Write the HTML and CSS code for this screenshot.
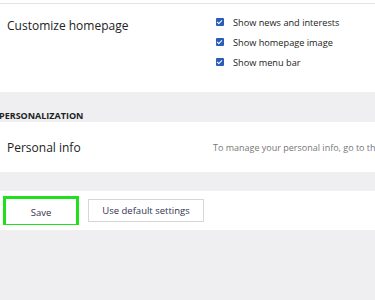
FILE: index.html
```html
<!DOCTYPE html>
<html lang="en">
<head>
  <meta charset="UTF-8">
  <meta name="viewport" content="width=device-width, initial-scale=1.0">
  <link rel="stylesheet" href="styles.css">
  <title>Settings</title>
</head>
<body>
  <div class="top-line"></div>

  <div class="card homepage-card">
    <div class="row-title">Customize homepage</div>
    <div class="options">
      <label class="option"><span class="check"></span>Show news and interests</label>
      <label class="option"><span class="check"></span>Show homepage image</label>
      <label class="option"><span class="check"></span>Show menu bar</label>
    </div>
  </div>

  <h3 class="section-heading">PERSONALIZATION</h3>

  <div class="card info-card">
    <div class="row-title">Personal info</div>
    <div class="info-text">To manage your personal info, go to the</div>
  </div>

  <div class="card button-card">
    <div class="highlight">
      <button class="btn btn-save">Save</button>
    </div>
    <button class="btn btn-default">Use default settings</button>
  </div>
</body>
</html>
```

FILE: styles.css
```css
body {
  font-family: 'Open Sans', 'Noto Sans', sans-serif;
  margin: 0;
  padding: 0;
  background-color: #efeff1;
  color: #222;
  overflow: hidden;
}

.top-line {
  height: 3px;
  background-color: #fff;
  border-bottom: 1px solid #e4e4e6;
}

.card {
  background-color: #fff;
  display: flex;
}

.homepage-card {
  height: 88px;
}

.row-title {
  font-size: 12px;
  padding-left: 7px;
  width: 209px;
  flex-shrink: 0;
}

.homepage-card .row-title {
  padding-top: 13px;
}

.options {
  padding-top: 11px;
  display: flex;
  flex-direction: column;
  gap: 6px;
}

.option {
  display: flex;
  align-items: center;
  font-size: 9.2px;
  color: #222;
  height: 14px;
  white-space: nowrap;
}

.check {
  width: 8px;
  height: 8px;
  background-color: #2a5cb8;
  border-radius: 1px;
  margin-right: 9px;
  position: relative;
}

.check::after {
  content: '';
  position: absolute;
  left: 2px;
  top: 1px;
  width: 2px;
  height: 4px;
  border: solid #fff;
  border-width: 0 1px 1px 0;
  transform: rotate(45deg);
}

.section-heading {
  margin: 0;
  height: 30px;
  box-sizing: border-box;
  padding-top: 18px;
  margin-left: -1px;
  font-size: 9px;
  font-weight: 700;
  color: #222;
  line-height: 11px;
}

.info-card {
  height: 50px;
  align-items: center;
}

.info-card .row-title {
  width: 206px;
}

.info-text {
  font-size: 9px;
  color: #777;
  white-space: nowrap;
}

.button-card {
  margin-top: 19px;
  height: 39px;
  align-items: center;
  padding-left: 3px;
}

.highlight {
  border: 3px solid #1fe01f;
  width: 70px;
  height: 23px;
}

.btn {
  font-family: 'Open Sans', 'Noto Sans', sans-serif;
  font-size: 9.5px;
  color: #33334f;
  background-color: #fff;
  border: 1px solid #d6d6da;
  padding: 0;
  cursor: pointer;
}

.btn-save {
  width: 100%;
  height: 100%;
  border: none;
}

.btn-default {
  margin-left: 9px;
  width: 116px;
  height: 23px;
}
```
